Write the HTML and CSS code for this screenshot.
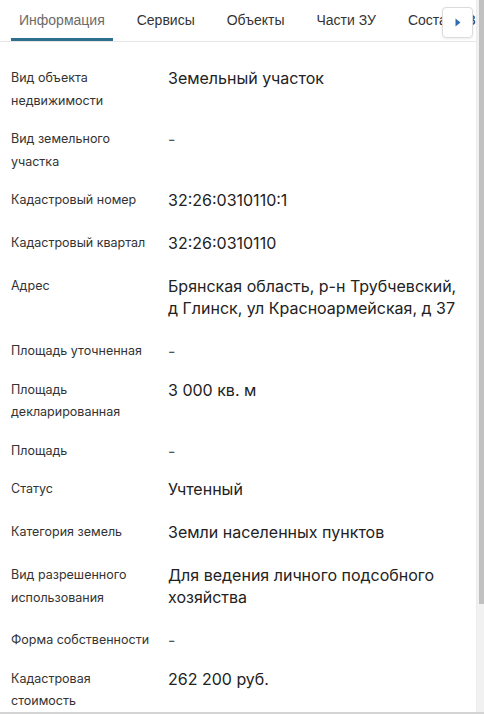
FILE: index.html
```html
<!DOCTYPE html>
<html lang="ru">
<head>
<meta charset="utf-8">
<title>Информация</title>
<link rel="stylesheet" href="styles.css">
</head>
<body>
<div class="page">
  <div class="main">
    <nav class="tabs">
      <span class="tab active">Информация</span>
      <span class="tab">Сервисы</span>
      <span class="tab">Объекты</span>
      <span class="tab">Части ЗУ</span>
      <span class="tab">Состав ЕЗП</span>
    </nav>
    <button class="tab-next" type="button" aria-label="Далее">
      <svg width="6" height="9" viewBox="0 0 6 9"><path d="M0.5 0.5 L5.5 4.5 L0.5 8.5 Z" fill="#2f6db3"/></svg>
    </button>
    <dl class="props">
      <div class="row"><dt>Вид объекта недвижимости</dt><dd class="val">Земельный участок</dd></div>
      <div class="row"><dt>Вид земельного участка</dt><dd class="empty">-</dd></div>
      <div class="row"><dt>Кадастровый номер</dt><dd class="val">32:26:0310110:1</dd></div>
      <div class="row"><dt>Кадастровый квартал</dt><dd class="val">32:26:0310110</dd></div>
      <div class="row"><dt>Адрес</dt><dd class="val">Брянская область, р-н Трубчевский, д Глинск, ул Красноармейская, д 37</dd></div>
      <div class="row"><dt>Площадь уточненная</dt><dd class="empty">-</dd></div>
      <div class="row"><dt>Площадь декларированная</dt><dd class="val">3 000 кв. м</dd></div>
      <div class="row"><dt>Площадь</dt><dd class="empty">-</dd></div>
      <div class="row"><dt>Статус</dt><dd class="val">Учтенный</dd></div>
      <div class="row"><dt>Категория земель</dt><dd class="val">Земли населенных пунктов</dd></div>
      <div class="row"><dt>Вид разрешенного использования</dt><dd class="val">Для ведения личного подсобного хозяйства</dd></div>
      <div class="row"><dt>Форма собственности</dt><dd class="empty">-</dd></div>
      <div class="row"><dt>Кадастровая стоимость</dt><dd class="val">262 200 руб.</dd></div>
    </dl>
  </div>
  <div class="scrollbar"><div class="thumb"></div></div>
</div>
</body>
</html>
```

FILE: styles.css
```css
html, body {
  margin: 0;
  padding: 0;
  background: #ffffff;
  overflow: hidden;
}

.page {
  display: flex;
  height: 712px;
  border-bottom: 2px solid #d4d4d4;
  overflow: hidden;
  font-family: Inter, "Noto Sans", sans-serif;
  color: #222;
}

.main {
  flex: 1;
  min-width: 0;
  position: relative;
  overflow: hidden;
}

.tabs {
  display: flex;
  gap: 16px;
  padding-left: 11px;
  height: 41px;
  border-bottom: 1px solid #e6e6e6;
  white-space: nowrap;
  overflow: hidden;
  font-family: "Liberation Sans", Arial, sans-serif;
  font-size: 14px;
}

.tab {
  flex: none;
  padding: 11px 8px 0;
  line-height: 18px;
  height: 27px;
  border-bottom: 3px solid transparent;
  color: #333;
}

.tab.active {
  color: #6b6b6b;
  border-bottom-color: #2e6f8e;
}

.tab-next {
  position: absolute;
  left: 442px;
  top: 7px;
  width: 31px;
  height: 31px;
  padding: 0;
  margin: 0;
  border: 1px solid #dcdcdc;
  border-radius: 4px;
  background: #fff;
  box-shadow: 0 1px 3px rgba(0, 0, 0, 0.08);
  display: flex;
  align-items: center;
  justify-content: center;
}

.tab-next svg {
  display: block;
  margin-left: 1px;
}

.props {
  margin: 0;
  padding: 25px 11px 0;
}

.row {
  display: grid;
  grid-template-columns: 157px 1fr;
  align-items: start;
  padding-bottom: 16px;
}

.row dt {
  font-size: 12.5px;
  line-height: 22.5px;
  color: #333;
  padding-right: 10px;
}

.row dd {
  margin: 0;
  font-size: 16px;
  line-height: 22px;
  color: #222;
}

.row dd.val {
  padding-bottom: 5px;
}

.row dd.empty {
  color: #555;
}

.scrollbar {
  flex: none;
  width: 8px;
  background: #f1f1f1;
  border-left: 1px solid #ececec;
  box-sizing: border-box;
  display: flex;
  justify-content: flex-end;
}

.thumb {
  width: 5px;
  height: 604px;
  background: #c1c1c1;
}
```
